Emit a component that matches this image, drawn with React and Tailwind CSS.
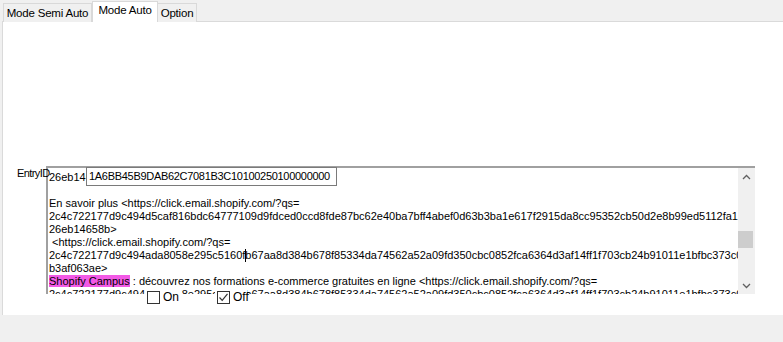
import React from "react";

const lines = [
  "26eb14658b>",
  "",
  "En savoir plus <https://click.email.shopify.com/?qs=",
  "2c4c722177d9c494d5caf816bdc64777109d9fdced0ccd8fde87bc62e40ba7bff4abef0d63b3ba1e617f2915da8cc95352cb50d2e8b99ed5112fa1",
  "26eb14658b>",
  " <https://click.email.shopify.com/?qs=",
  "CARET",
  "b3af063ae>",
  "HL",
  "2c4c722177d9c494ada8058e295c5160fb67aa8d384b678f85334da74562a52a09fd350cbc0852fca6364d3af14ff1f703cb24b91011e1bfbc373c0",
];

function Line({ t }) {
  if (t === "CARET") {
    return (
      <div className="h-[13px] whitespace-pre">
        2c4c722177d9c494ada8058e295c5160f
        <span className="inline-block w-px h-[13px] bg-black align-top -mr-px"></span>
        b67aa8d384b678f85334da74562a52a09fd350cbc0852fca6364d3af14ff1f703cb24b91011e1bfbc373c0
      </div>
    );
  }
  if (t === "HL") {
    return (
      <div className="h-[13px] whitespace-pre">
        <span className="bg-[#f25ae6]">Shopify Campus</span>
        {" : découvrez nos formations e-commerce gratuites en ligne <https://click.email.shopify.com/?qs="}
      </div>
    );
  }
  return <div className="h-[13px] whitespace-pre">{t}</div>;
}

function Check({ checked }) {
  return (
    <span className="w-[13px] h-[13px] border border-[#333333] bg-white flex items-center justify-center">
      {checked && (
        <svg width="11" height="11" viewBox="0 0 11 11">
          <path d="M1.5 5.5 L4.2 8.3 L9.5 1.8" fill="none" stroke="#333333" strokeWidth="1.2" />
        </svg>
      )}
    </span>
  );
}

export default function App() {
  return (
    <div
      className="w-[783px] h-[342px] bg-[#f0f0f0] overflow-hidden text-black"
      style={{ fontFamily: '"Liberation Sans", Arial, sans-serif' }}
    >
      {/* tabs */}
      <div className="h-[22px] flex items-end pl-[3px] text-[11.5px] tracking-[-0.2px]">
        <div className="w-[89px] h-[19px] border border-b-0 border-[#d9d9d9] bg-[#f0f0f0] flex items-center justify-center pt-px">
          Mode Semi Auto
        </div>
        <div className="relative z-10 w-[66px] h-[21px] border border-b-0 border-[#d9d9d9] bg-white flex items-center justify-center pb-[2px]">
          Mode Auto
        </div>
        <div className="w-[39px] h-[19px] border border-b-0 border-l-0 border-[#d9d9d9] bg-[#f0f0f0] flex items-center justify-center pt-px">
          Option
        </div>
      </div>

      {/* panel */}
      <div className="-mt-px ml-[2px] h-[294px] bg-white border-t border-l border-[#dadada] pt-[144px] pl-[14px]">
        <div className="flex items-start text-[11px] leading-[13px]">
          <div className="relative z-10 w-[29px] pt-px whitespace-nowrap tracking-[-0.6px]">EntryID</div>
          <div className="relative w-[709px] h-[128px] border-t-2 border-l-2 border-[#a0a0a0] bg-white flex">
            <div className="flex-1 overflow-hidden pt-[3px] pl-px">
              {lines.map((t, i) => (
                <Line key={i} t={t} />
              ))}
            </div>
            {/* scrollbar */}
            <div className="w-[17px] bg-[#f0f0f0] flex flex-col">
              <div className="h-[17px] flex items-center justify-center">
                <svg width="9" height="6" viewBox="0 0 9 6">
                  <path d="M1 5 L4.5 1.5 L8 5" fill="none" stroke="#606060" strokeWidth="1.3" />
                </svg>
              </div>
              <div className="h-[46px]"></div>
              <div className="h-[17px] w-[15px] bg-[#cdcdcd]"></div>
              <div className="flex-1"></div>
              <div className="h-[17px] flex items-center justify-center">
                <svg width="9" height="6" viewBox="0 0 9 6">
                  <path d="M1 1 L4.5 4.5 L8 1" fill="none" stroke="#606060" strokeWidth="1.3" />
                </svg>
              </div>
            </div>

            {/* EntryID overlay textbox */}
            <div className="absolute left-[38px] -top-px w-[251px] h-[19px] border border-[#7a7a7a] bg-white pl-[2px] pt-[2px] whitespace-nowrap tracking-[-0.3px]">
              1A6BB45B9DAB62C7081B3C10100250100000000
            </div>

            {/* checkboxes */}
            <div className="absolute left-[97px] top-[121px] w-[36px] h-[16px] bg-white flex items-center gap-[3px] pl-[2px] text-[12px]">
              <Check checked={false} />
              <span>On</span>
            </div>
            <div className="absolute left-[167px] top-[121px] w-[32px] h-[16px] bg-white flex items-center gap-[3px] pl-[2px] text-[12px]">
              <Check checked={true} />
              <span>Off</span>
            </div>
          </div>
        </div>
      </div>
    </div>
  );
}
